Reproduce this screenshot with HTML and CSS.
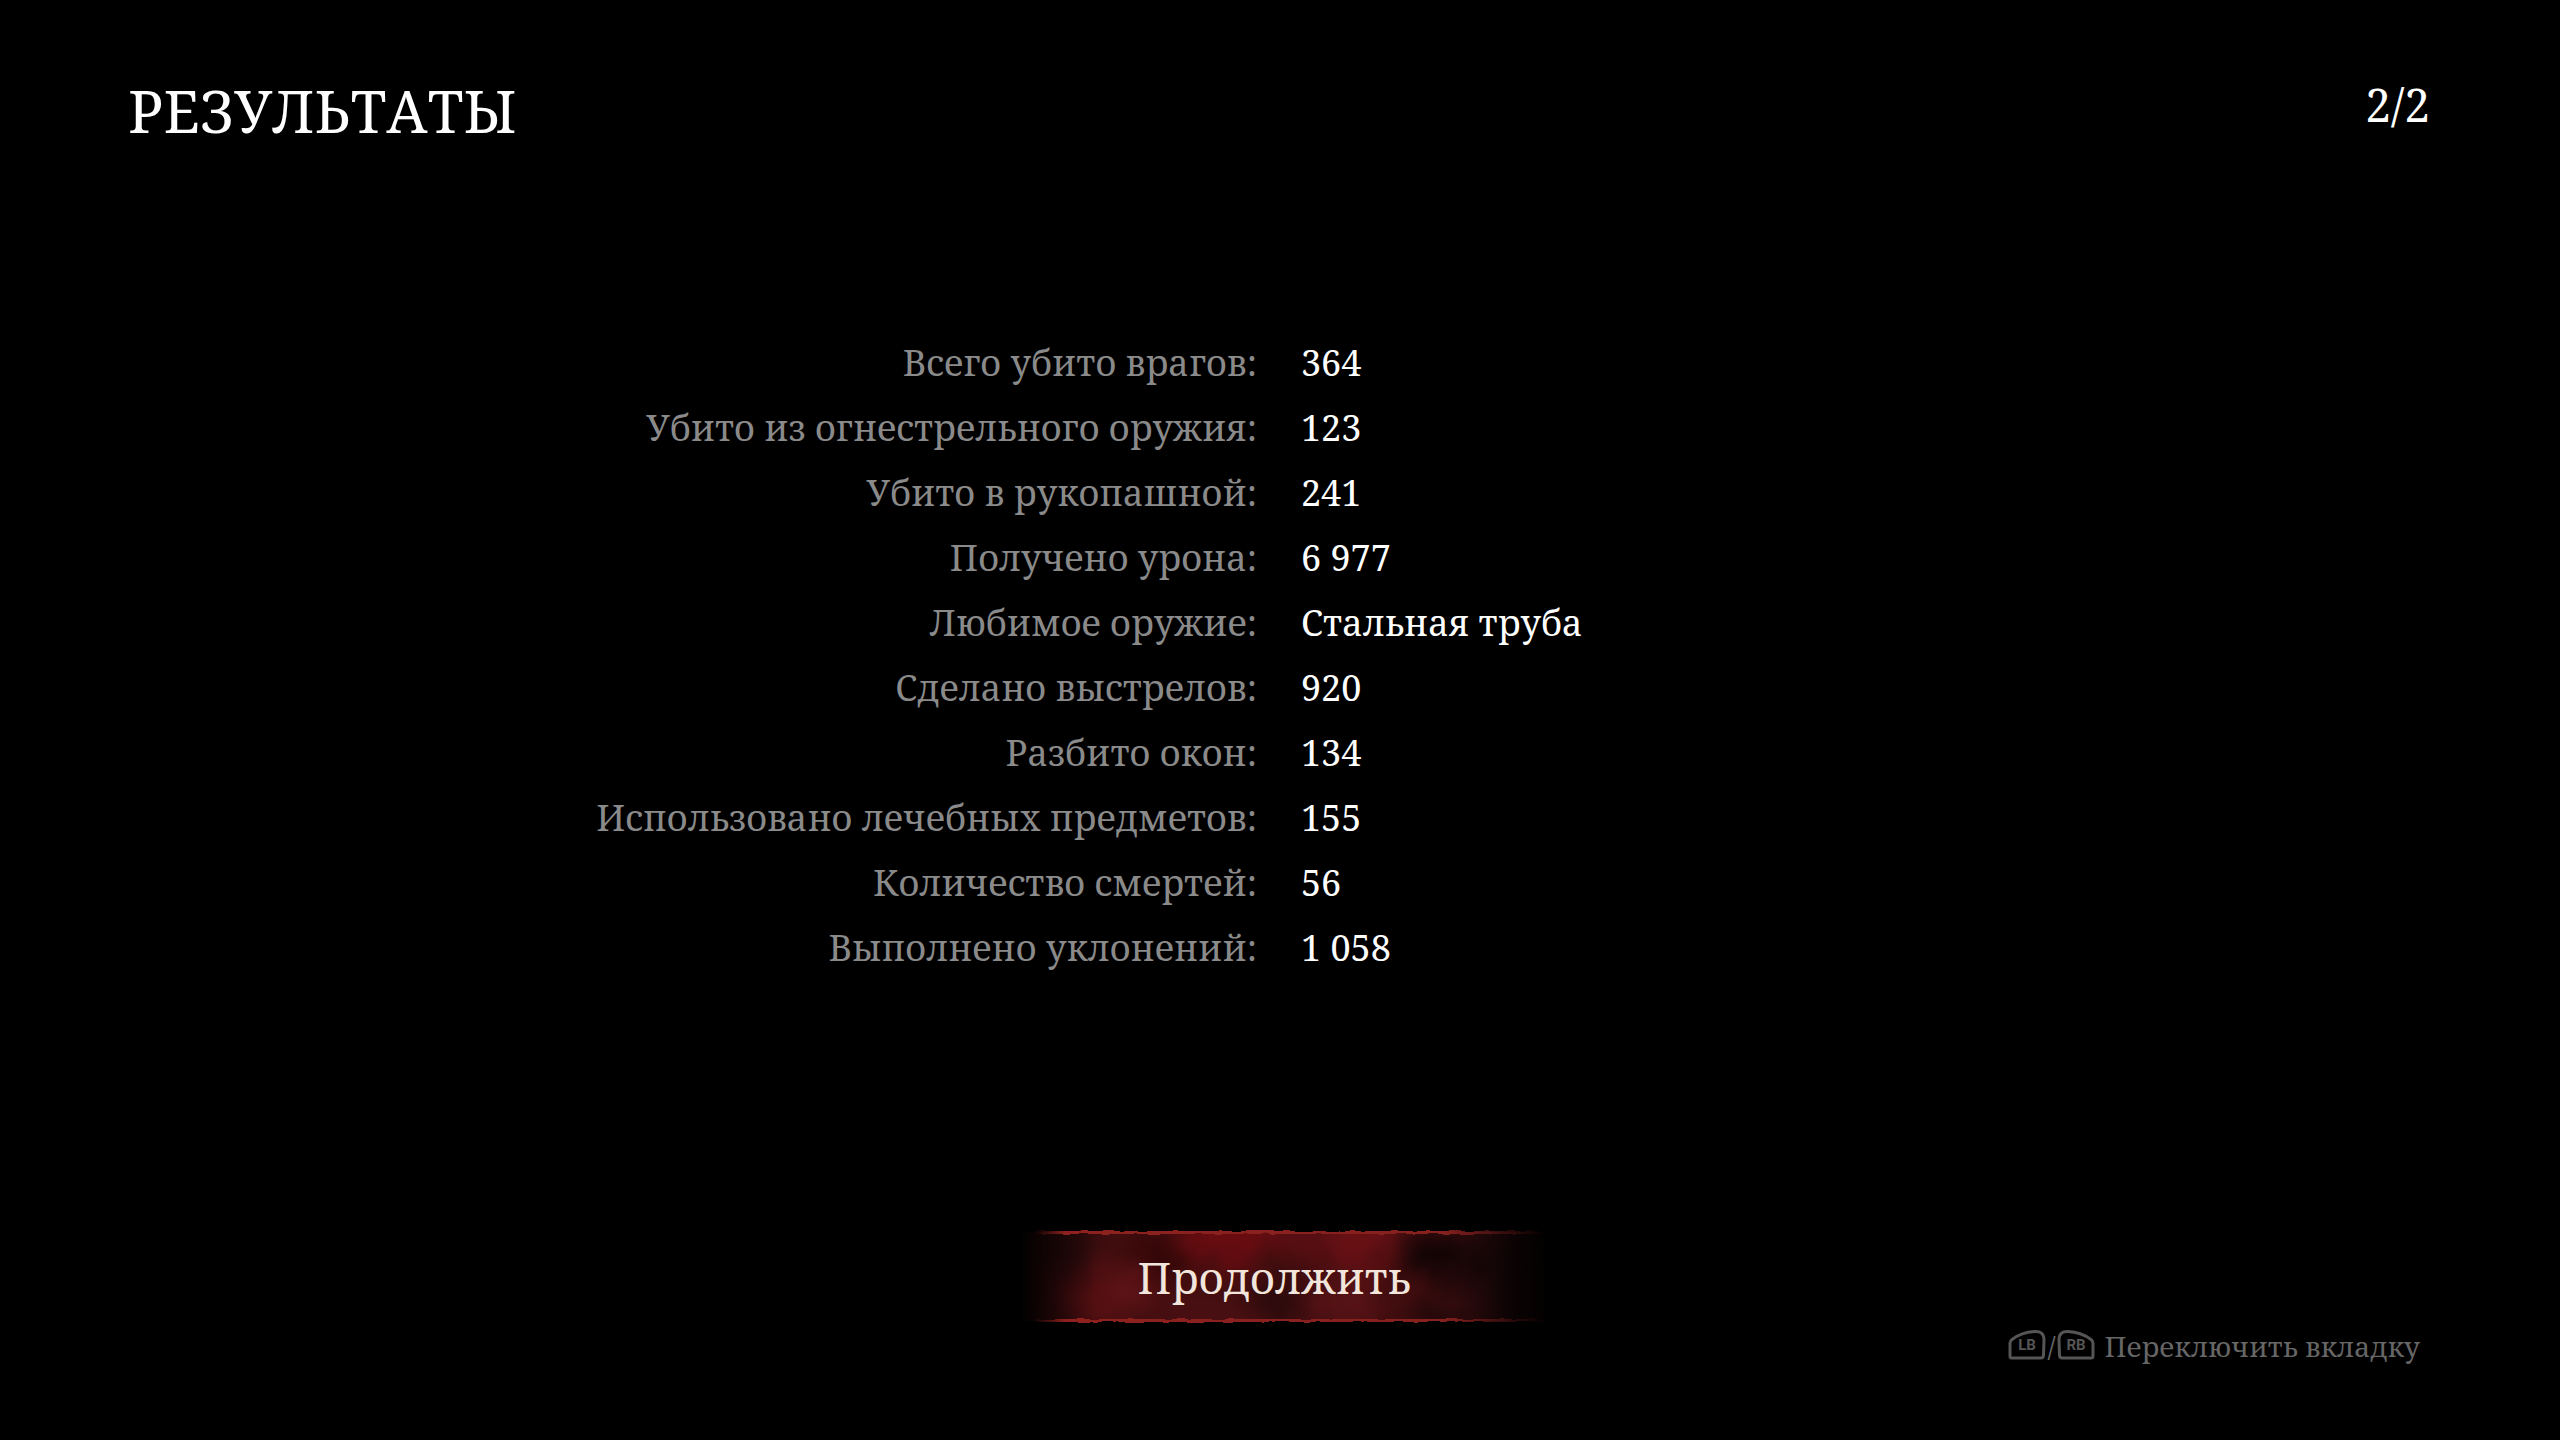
FILE: index.html
```html
<!DOCTYPE html>
<html lang="ru">
<head>
  <meta charset="UTF-8" />
  <meta name="viewport" content="width=device-width, initial-scale=1.0"/>
  <title>Результаты</title>
  <link rel="stylesheet" href="styles.css">
</head>
<body>
  <header class="top">
    <h1 class="title">РЕЗУЛЬТАТЫ</h1>
    <div class="page-count">2/2</div>
  </header>

  <main class="results">
    <table class="stats">
      <tr><th scope="row">Всего убито врагов:</th><td>364</td></tr>
      <tr><th scope="row">Убито из огнестрельного оружия:</th><td>123</td></tr>
      <tr><th scope="row">Убито в рукопашной:</th><td>241</td></tr>
      <tr><th scope="row">Получено урона:</th><td>6 977</td></tr>
      <tr><th scope="row">Любимое оружие:</th><td>Стальная труба</td></tr>
      <tr><th scope="row">Сделано выстрелов:</th><td>920</td></tr>
      <tr><th scope="row">Разбито окон:</th><td>134</td></tr>
      <tr><th scope="row">Использовано лечебных предметов:</th><td>155</td></tr>
      <tr><th scope="row">Количество смертей:</th><td>56</td></tr>
      <tr><th scope="row">Выполнено уклонений:</th><td>1 058</td></tr>
    </table>
  </main>

  <footer class="bottom">
    <button class="continue" type="button">
      <svg class="banner" viewBox="0 0 540 96" preserveAspectRatio="none" aria-hidden="true">
        <defs>
          <filter id="soft" x="-50" y="-50" width="640" height="200" filterUnits="userSpaceOnUse" color-interpolation-filters="sRGB">
            <feGaussianBlur stdDeviation="12" result="blobs"/>
            <feTurbulence type="fractalNoise" baseFrequency="0.02" numOctaves="3" seed="7"/>
            <feDisplacementMap in="blobs" scale="30" xChannelSelector="R" yChannelSelector="G"/>
          </filter>
          <filter id="rough" x="0" y="-5" width="540" height="110" filterUnits="userSpaceOnUse" color-interpolation-filters="sRGB">
            <feTurbulence type="fractalNoise" baseFrequency="0.06 0.2" numOctaves="3" seed="4"/>
            <feDisplacementMap in="SourceGraphic" scale="4" xChannelSelector="R" yChannelSelector="G"/>
          </filter>
          <linearGradient id="fade">
            <stop offset="0.02" stop-color="#000"/>
            <stop offset="0.09" stop-color="#777"/>
            <stop offset="0.16" stop-color="#fff"/>
            <stop offset="0.82" stop-color="#fff"/>
            <stop offset="0.94" stop-color="#333"/>
            <stop offset="1" stop-color="#000"/>
          </linearGradient>
          <linearGradient id="edgeFade">
            <stop offset="0.03" stop-color="#8e211e" stop-opacity="0"/>
            <stop offset="0.09" stop-color="#8e211e"/>
            <stop offset="0.8" stop-color="#86211e"/>
            <stop offset="1" stop-color="#6a1a18" stop-opacity="0"/>
          </linearGradient>
          <mask id="sides"><rect width="540" height="96" fill="url(#fade)"/></mask>
          <clipPath id="body"><rect y="3" width="540" height="89"/></clipPath>
        </defs>
        <g mask="url(#sides)">
          <g clip-path="url(#body)">
            <g filter="url(#soft)">
              <rect x="-50" y="-50" width="640" height="200" fill="#420d0f"/>
              <ellipse cx="60" cy="20" rx="34" ry="20" fill="#2c0b0c"/>
              <ellipse cx="150" cy="28" rx="26" ry="24" fill="#330607"/>
              <ellipse cx="84" cy="70" rx="30" ry="28" fill="#540f12"/>
              <ellipse cx="122" cy="62" rx="26" ry="18" fill="#611418"/>
              <ellipse cx="222" cy="8" rx="50" ry="26" fill="#6a0c10"/>
              <ellipse cx="290" cy="10" rx="36" ry="22" fill="#580e12"/>
              <ellipse cx="352" cy="14" rx="34" ry="32" fill="#681014"/>
              <ellipse cx="335" cy="76" rx="32" ry="22" fill="#581317"/>
              <ellipse cx="200" cy="86" rx="50" ry="16" fill="#4a1013"/>
              <ellipse cx="266" cy="74" rx="24" ry="16" fill="#260a0b"/>
              <ellipse cx="436" cy="32" rx="40" ry="26" fill="#120404"/>
              <ellipse cx="430" cy="88" rx="32" ry="12" fill="#180607"/>
              <ellipse cx="492" cy="54" rx="32" ry="60" fill="#2c0c0e"/>
              <ellipse cx="450" cy="64" rx="26" ry="10" fill="#3e0e10"/>
            </g>
          </g>
        </g>
        <g filter="url(#rough)" fill="url(#edgeFade)">
          <rect x="10" y="2" width="528" height="3"/>
          <rect x="10" y="90" width="528" height="3"/>
        </g>
      </svg>
      <span class="continue-text">Продолжить</span>
    </button>

    <div class="hint">
      <svg class="bumper" viewBox="0 0 38 34" role="img" aria-label="LB">
        <path d="M2 14 Q2 12 4 10.500 Q14 3 27 2.500 Q36 2 36 11 L35.500 26 Q35.500 29 32.500 29 L4 29 Q2 29 2 27 Z"/>
        <text x="19" y="21">LB</text>
      </svg>
      <span class="slash">/</span>
      <svg class="bumper" viewBox="0 0 38 34" role="img" aria-label="RB">
        <path d="M36 14 Q36 12 34 10.500 Q24 3 11 2.500 Q2 2 2 11 L2.500 26 Q2.500 29 5.500 29 L34 29 Q36 29 36 27 Z"/>
        <text x="19" y="21">RB</text>
      </svg>
      <span class="hint-text">Переключить вкладку</span>
    </div>
  </footer>
</body>
</html>
```
FILE: styles.css
```css
* {
  box-sizing: border-box;
}

body {
  margin: 0;
  min-height: 100vh;
  padding: 76px 130px 73px 128px;
  display: flex;
  flex-direction: column;
  background: #000;
  color: #fff;
  font-family: "Noto Serif", "Droid Serif", "Liberation Serif", serif;
}

.top {
  display: flex;
  justify-content: space-between;
  align-items: flex-start;
}

.title {
  margin: 0;
  font-size: 58px;
  font-weight: normal;
  line-height: 70px;
}

.page-count {
  font-size: 46px;
  line-height: 56px;
}

.results {
  flex: 1;
  padding-top: 184px;
}

.stats {
  width: 100%;
  table-layout: fixed;
  border-collapse: collapse;
  font-size: 36px;
  line-height: 65px;
}

.stats th,
.stats td {
  padding: 0 22px;
}

.stats th {
  color: #8a8a8a;
  font-weight: normal;
  text-align: right;
}

.bottom {
  display: flex;
  flex-direction: column;
}

.continue {
  position: relative;
  align-self: center;
  width: 540px;
  height: 96px;
  padding: 0 10px 0 0;
  border: 0;
  background: none;
  color: #f2e6dc;
  font-family: inherit;
  font-size: 43px;
  cursor: pointer;
}

.banner {
  position: absolute;
  inset: 0;
  width: 100%;
  height: 100%;
}

.continue-text {
  position: relative;
}

.hint {
  align-self: flex-end;
  display: flex;
  align-items: center;
  padding-right: 10px;
  color: #666;
  font-size: 28px;
  line-height: 42px;
}

.bumper {
  width: 38px;
  height: 34px;
}

.bumper path {
  fill: none;
  stroke: #555;
  stroke-width: 3;
}

.bumper text {
  fill: #555;
  font-family: Roboto, "Liberation Sans", sans-serif;
  font-size: 15px;
  font-weight: bold;
  text-anchor: middle;
}

.slash {
  padding: 0 1px;
}

.hint-text {
  padding-left: 10px;
}
```
